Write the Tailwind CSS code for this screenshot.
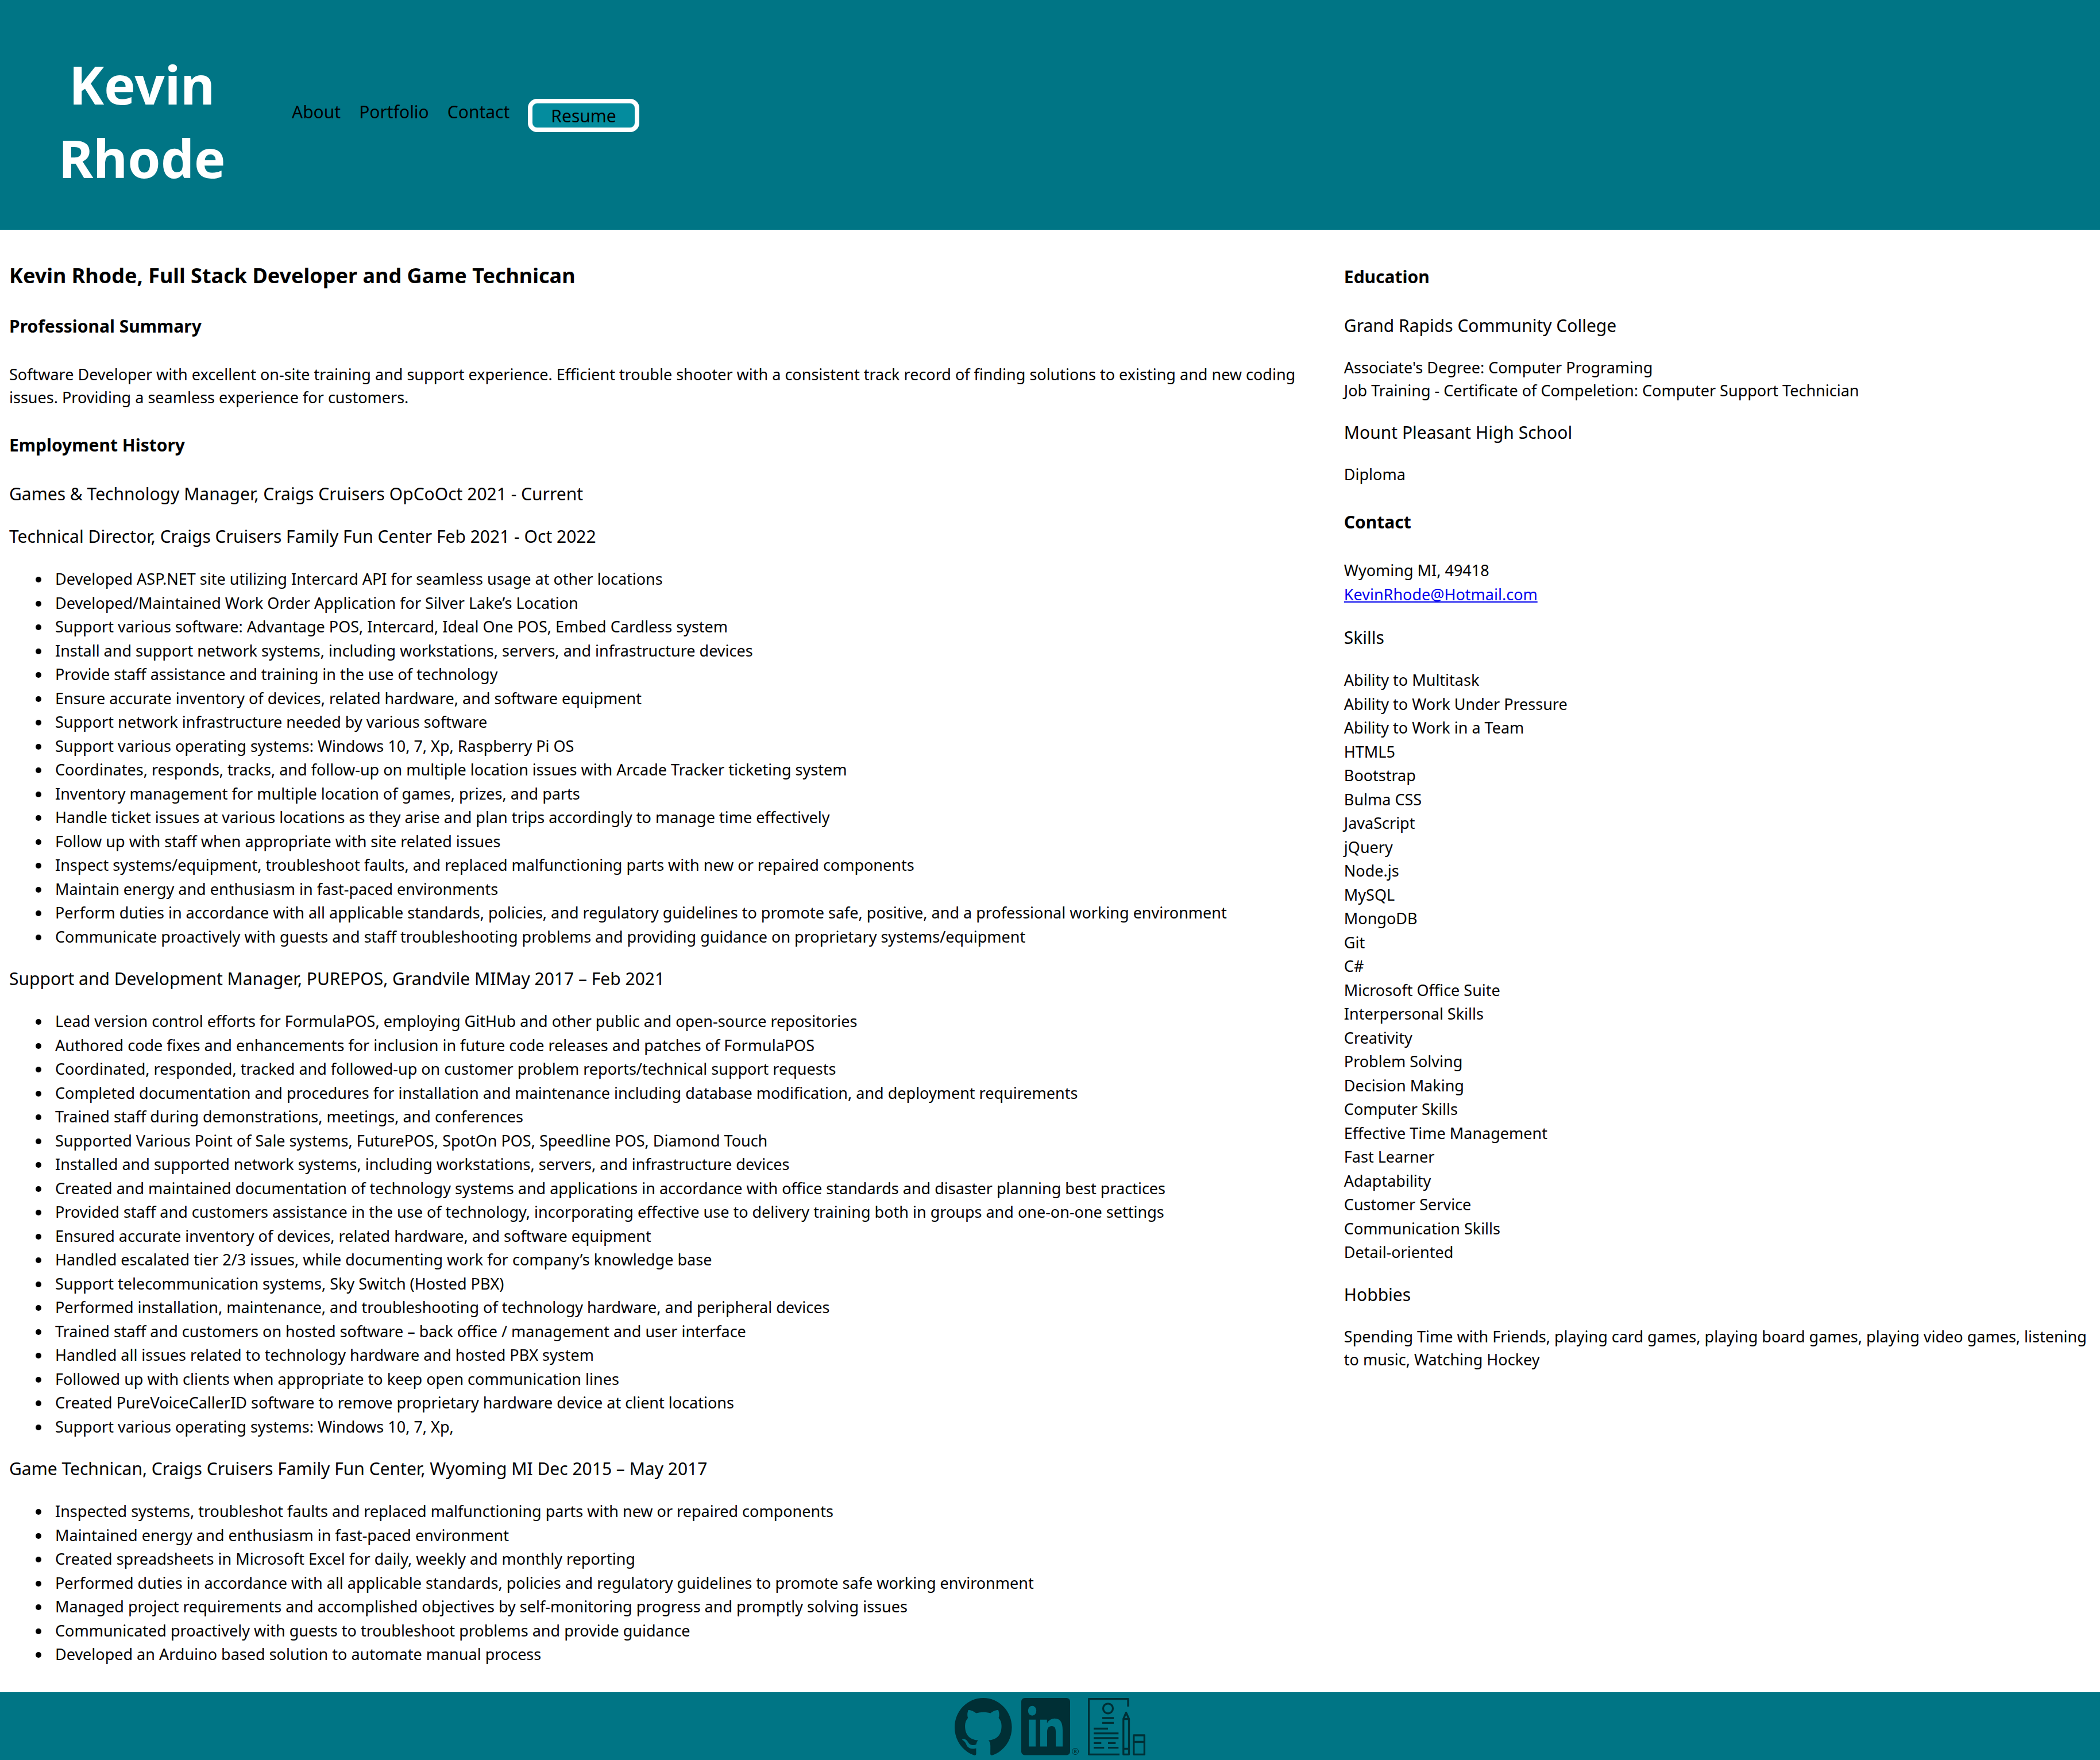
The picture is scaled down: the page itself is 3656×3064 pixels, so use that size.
<!DOCTYPE html>
<html lang="en">
<head>
<meta charset="utf-8">
<meta name="viewport" content="width=device-width, initial-scale=1">
<title>Kevin Rhode | Resume</title>
<script src="https://cdn.jsdelivr.net/npm/@tailwindcss/browser@4"></script>
</head>
<body class="flex min-h-screen flex-col bg-white font-['Segoe_UI','Noto_Sans',sans-serif] text-[27px] leading-[40px] text-black">

<header class="flex items-start bg-[#007585] px-[102px] pt-[83px] pb-[61px]">
  <h1 class="w-[290px] text-center text-[92px] leading-[128px] font-bold text-white">Kevin Rhode</h1>
  <nav class="ml-[116px] pt-[89px] text-[30px]">
    <ul class="flex items-start gap-8 leading-[46px]">
      <li><a href="#about">About</a></li>
      <li><a href="#portfolio">Portfolio</a></li>
      <li><a href="#contact">Contact</a></li>
      <li><a href="#resume" class="block rounded-2xl border-8 border-white bg-[#048c9e] px-8 pt-[2px] leading-[40px]">Resume</a></li>
    </ul>
  </nav>
</header>

<main class="grid grow grid-cols-[64fr_36fr]">
  <section class="px-4 pt-[55px] pb-[42px]">
    <h2 class="text-[36px] leading-[50px] font-bold">Kevin Rhode, Full Stack Developer and Game Technican</h2>

    <h3 class="mt-[42px] mb-[43px] text-[30px] leading-[42px] font-bold">Professional Summary</h3>
    <p>Software Developer with excellent on-site training and support experience. Efficient trouble shooter with a consistent track record of finding solutions to existing and new coding issues. Providing a seamless experience for customers.</p>

    <h3 class="mt-[42px] mb-[43px] text-[30px] leading-[42px] font-bold">Employment History</h3>

    <h4 class="my-8 text-[30px] leading-[42px]">Games &amp; Technology Manager, Craigs Cruisers OpCoOct 2021 - Current</h4>
    <h4 class="my-8 text-[30px] leading-[42px]">Technical Director, Craigs Cruisers Family Fun Center Feb 2021 - Oct 2022</h4>
    <ul class="list-disc pl-[72px] *:pl-2 *:odd:leading-[42px] *:even:leading-[41px]">
      <li>Developed ASP.NET site utilizing Intercard API for seamless usage at other locations</li>
      <li>Developed/Maintained Work Order Application for Silver Lake’s Location</li>
      <li>Support various software: Advantage POS, Intercard, Ideal One POS, Embed Cardless system</li>
      <li>Install and support network systems, including workstations, servers, and infrastructure devices</li>
      <li>Provide staff assistance and training in the use of technology</li>
      <li>Ensure accurate inventory of devices, related hardware, and software equipment</li>
      <li>Support network infrastructure needed by various software</li>
      <li>Support various operating systems: Windows 10, 7, Xp, Raspberry Pi OS</li>
      <li>Coordinates, responds, tracks, and follow-up on multiple location issues with Arcade Tracker ticketing system</li>
      <li>Inventory management for multiple location of games, prizes, and parts</li>
      <li>Handle ticket issues at various locations as they arise and plan trips accordingly to manage time effectively</li>
      <li>Follow up with staff when appropriate with site related issues</li>
      <li>Inspect systems/equipment, troubleshoot faults, and replaced malfunctioning parts with new or repaired components</li>
      <li>Maintain energy and enthusiasm in fast-paced environments</li>
      <li>Perform duties in accordance with all applicable standards, policies, and regulatory guidelines to promote safe, positive, and a professional working environment</li>
      <li>Communicate proactively with guests and staff troubleshooting problems and providing guidance on proprietary systems/equipment</li>
    </ul>

    <h4 class="my-8 text-[30px] leading-[42px]">Support and Development Manager, PUREPOS, Grandvile MIMay 2017 – Feb 2021</h4>
    <ul class="list-disc pl-[72px] *:pl-2 *:odd:leading-[42px] *:even:leading-[41px]">
      <li>Lead version control efforts for FormulaPOS, employing GitHub and other public and open-source repositories</li>
      <li>Authored code fixes and enhancements for inclusion in future code releases and patches of FormulaPOS</li>
      <li>Coordinated, responded, tracked and followed-up on customer problem reports/technical support requests</li>
      <li>Completed documentation and procedures for installation and maintenance including database modification, and deployment requirements</li>
      <li>Trained staff during demonstrations, meetings, and conferences</li>
      <li>Supported Various Point of Sale systems, FuturePOS, SpotOn POS, Speedline POS, Diamond Touch</li>
      <li>Installed and supported network systems, including workstations, servers, and infrastructure devices</li>
      <li>Created and maintained documentation of technology systems and applications in accordance with office standards and disaster planning best practices</li>
      <li>Provided staff and customers assistance in the use of technology, incorporating effective use to delivery training both in groups and one-on-one settings</li>
      <li>Ensured accurate inventory of devices, related hardware, and software equipment</li>
      <li>Handled escalated tier 2/3 issues, while documenting work for company’s knowledge base</li>
      <li>Support telecommunication systems, Sky Switch (Hosted PBX)</li>
      <li>Performed installation, maintenance, and troubleshooting of technology hardware, and peripheral devices</li>
      <li>Trained staff and customers on hosted software – back office / management and user interface</li>
      <li>Handled all issues related to technology hardware and hosted PBX system</li>
      <li>Followed up with clients when appropriate to keep open communication lines</li>
      <li>Created PureVoiceCallerID software to remove proprietary hardware device at client locations</li>
      <li>Support various operating systems: Windows 10, 7, Xp,</li>
    </ul>

    <h4 class="my-8 text-[30px] leading-[42px]">Game Technican, Craigs Cruisers Family Fun Center, Wyoming MI Dec 2015 – May 2017</h4>
    <ul class="list-disc pl-[72px] *:pl-2 *:odd:leading-[42px] *:even:leading-[41px]">
      <li>Inspected systems, troubleshot faults and replaced malfunctioning parts with new or repaired components</li>
      <li>Maintained energy and enthusiasm in fast-paced environment</li>
      <li>Created spreadsheets in Microsoft Excel for daily, weekly and monthly reporting</li>
      <li>Performed duties in accordance with all applicable standards, policies and regulatory guidelines to promote safe working environment</li>
      <li>Managed project requirements and accomplished objectives by self-monitoring progress and promptly solving issues</li>
      <li>Communicated proactively with guests to troubleshoot problems and provide guidance</li>
      <li>Developed an Arduino based solution to automate manual process</li>
    </ul>
  </section>

  <aside class="pt-[61px] pr-4">
    <h3 class="mb-[43px] text-[30px] leading-[42px] font-bold">Education</h3>
    <h4 class="my-8 text-[30px] leading-[42px]">Grand Rapids Community College</h4>
    <p>Associate's Degree: Computer Programing<br>Job Training - Certificate of Compeletion: Computer Support Technician</p>
    <h4 class="my-8 text-[30px] leading-[42px]">Mount Pleasant High School</h4>
    <p>Diploma</p>

    <h3 class="mt-[42px] mb-[43px] text-[30px] leading-[42px] font-bold">Contact</h3>
    <p>Wyoming MI, 49418</p>
    <a href="mailto:KevinRhode@Hotmail.com" class="block leading-[44px] text-[#0000ee] underline">KevinRhode@Hotmail.com</a>

    <h4 class="my-8 text-[30px] leading-[42px]">Skills</h4>
    <ul class="*:odd:leading-[42px] *:even:leading-[41px]">
      <li>Ability to Multitask</li>
      <li>Ability to Work Under Pressure</li>
      <li>Ability to Work in a Team</li>
      <li>HTML5</li>
      <li>Bootstrap</li>
      <li>Bulma CSS</li>
      <li>JavaScript</li>
      <li>jQuery</li>
      <li>Node.js</li>
      <li>MySQL</li>
      <li>MongoDB</li>
      <li>Git</li>
      <li>C#</li>
      <li>Microsoft Office Suite</li>
      <li>Interpersonal Skills</li>
      <li>Creativity</li>
      <li>Problem Solving</li>
      <li>Decision Making</li>
      <li>Computer Skills</li>
      <li>Effective Time Management</li>
      <li>Fast Learner</li>
      <li>Adaptability</li>
      <li>Customer Service</li>
      <li>Communication Skills</li>
      <li>Detail-oriented</li>
    </ul>

    <h4 class="my-8 text-[30px] leading-[42px]">Hobbies</h4>
    <p>Spending Time with Friends, playing card games, playing board games, playing video games, listening to music, Watching Hockey</p>
  </aside>
</main>

<footer class="flex justify-center gap-4 bg-[#007585] pt-[10px] pb-2 text-[#002f35]">
  <a href="https://github.com/" aria-label="GitHub">
    <svg class="size-[100px]" viewBox="0 0 98 98" fill="currentColor" aria-hidden="true"><path fill-rule="evenodd" clip-rule="evenodd" transform="scale(1 1.02)" d="M48.854 0C21.839 0 0 22 0 49.217c0 21.756 13.993 40.172 33.405 46.69 2.427.49 3.316-1.059 3.316-2.362 0-1.141-.08-5.052-.08-9.127-13.59 2.934-16.42-5.867-16.42-5.867-2.184-5.704-5.42-7.17-5.42-7.17-4.448-3.015.324-3.015.324-3.015 4.934.326 7.523 5.052 7.523 5.052 4.367 7.496 11.404 5.378 14.235 4.074.404-3.178 1.699-5.378 3.074-6.6-10.839-1.141-22.243-5.378-22.243-24.283 0-5.378 1.94-9.778 5.014-13.2-.485-1.222-2.184-6.275.486-13.038 0 0 4.125-1.304 13.426 5.052a46.97 46.97 0 0 1 12.214-1.63c4.125 0 8.33.571 12.213 1.63 9.302-6.356 13.427-5.052 13.427-5.052 2.67 6.763.97 11.816.485 13.038 3.155 3.422 5.015 7.822 5.015 13.2 0 18.905-11.404 23.06-22.324 24.283 1.78 1.548 3.316 4.481 3.316 9.126 0 6.6-.08 11.897-.08 13.526 0 1.304.89 2.853 3.316 2.364 19.412-6.52 33.405-24.935 33.405-46.691C97.707 22 75.788 0 48.854 0z"/></svg>
  </a>
  <a href="https://www.linkedin.com/" aria-label="LinkedIn">
    <svg class="size-[100px]" viewBox="0 0 100 100" aria-hidden="true">
      <rect width="85" height="99.5" rx="6" fill="currentColor"/>
      <g fill="#007585">
        <ellipse cx="19" cy="22.300" rx="7.200" ry="8.500"/>
        <rect x="13" y="37.700" width="12" height="46.800"/>
        <path d="M33 37.700H44.800V44C48 38.500 53 35.800 58 35.800C69 35.800 72 44.500 72 56V84.500H60V59C60 53 58.500 49 53 49S45 53 45 59.500V84.500H33Z"/>
      </g>
      <circle cx="94" cy="93" r="5.500" fill="none" stroke="currentColor" stroke-width="1"/>
      <text x="94" y="96" text-anchor="middle" class="font-['Noto_Sans',sans-serif] text-[8px] font-bold" fill="currentColor">R</text>
    </svg>
  </a>
  <a href="#resume" aria-label="Resume">
    <svg class="size-[100px]" viewBox="0 0 100 100" fill="none" stroke="currentColor" stroke-width="3.3" stroke-linejoin="round" aria-hidden="true">
      <path d="M70 15V1.600H1.600V98.300H55"/>
      <circle cx="35" cy="18.300" r="8.500"/>
      <path d="M25 35H45M25 43.300H45M10 53.300H35M10 61.600H53.300M10 70H53.300M10 78.300H23.300M35 78.300H48.300M10 86.600H28.300M35 86.600H53.300"/>
      <path d="M61.800 36.500L66.500 25.500L71.500 36.500V98.300H61.800ZM61.800 36.500H71.500M61.800 88.300H71.500M79.800 65H98.400V98.300H79.800ZM79.800 76.500H98.400"/>
    </svg>
  </a>
</footer>
</body>
</html>
